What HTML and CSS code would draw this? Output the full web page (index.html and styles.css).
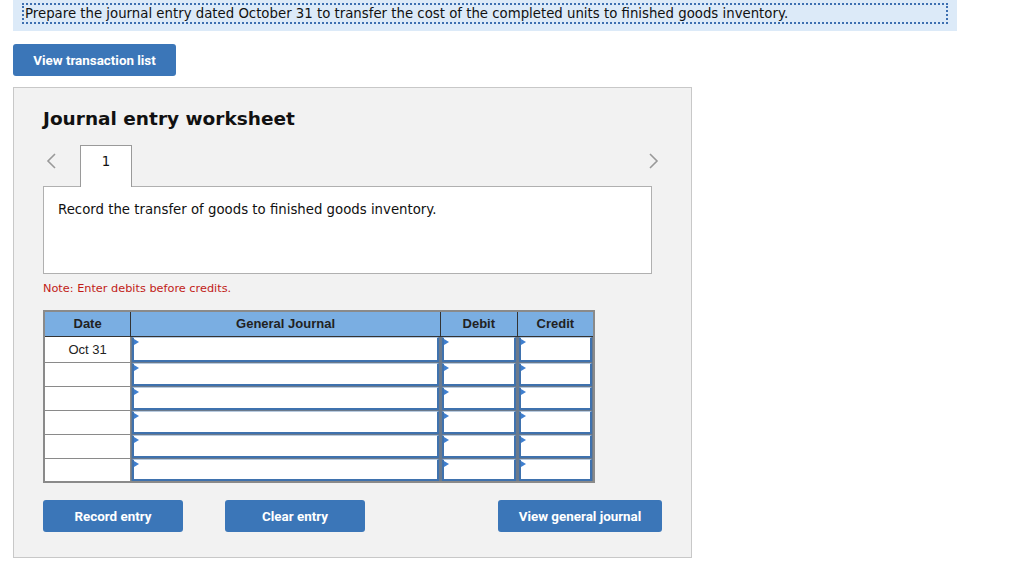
FILE: index.html
```html
<!DOCTYPE html>
<html>
<head>
<meta charset="utf-8">
<link rel="stylesheet" href="styles.css">
</head>
<body>
<div class="prompt"><span class="prompt-text">Prepare the journal entry dated October 31 to transfer the cost of the completed units to finished goods inventory.</span></div>
<div class="top-btn-row"><button class="btn btn-wide">View transaction list</button></div>
<div class="panel">
  <h2 class="title">Journal entry worksheet</h2>
  <div class="tabs">
    <span class="arrow arrow-left"><svg width="12" height="18" viewBox="0 0 12 18"><path d="M10 2 L3 9 L10 16" fill="none" stroke="#999" stroke-width="1.6"/></svg></span>
    <div class="tab">1</div>
    <span class="arrow arrow-right"><svg width="12" height="18" viewBox="0 0 12 18"><path d="M2 2 L9 9 L2 16" fill="none" stroke="#999" stroke-width="1.6"/></svg></span>
  </div>
  <div class="desc">Record the transfer of goods to finished goods inventory.</div>
  <div class="note">Note: Enter debits before credits.</div>
  <table class="journal">
    <thead>
      <tr><th class="c-date">Date</th><th class="c-acct">General Journal</th><th class="c-num">Debit</th><th class="c-num">Credit</th></tr>
    </thead>
    <tbody>
      <tr><td class="d">Oct 31</td><td class="in"><div class="box"></div></td><td class="in"><div class="box"></div></td><td class="in"><div class="box"></div></td></tr>
      <tr><td class="d"></td><td class="in"><div class="box"></div></td><td class="in"><div class="box"></div></td><td class="in"><div class="box"></div></td></tr>
      <tr><td class="d"></td><td class="in"><div class="box"></div></td><td class="in"><div class="box"></div></td><td class="in"><div class="box"></div></td></tr>
      <tr><td class="d"></td><td class="in"><div class="box"></div></td><td class="in"><div class="box"></div></td><td class="in"><div class="box"></div></td></tr>
      <tr><td class="d"></td><td class="in"><div class="box"></div></td><td class="in"><div class="box"></div></td><td class="in"><div class="box"></div></td></tr>
      <tr><td class="d"></td><td class="in"><div class="box"></div></td><td class="in"><div class="box"></div></td><td class="in"><div class="box"></div></td></tr>
    </tbody>
  </table>
  <div class="actions">
    <button class="btn btn-act">Record entry</button>
    <button class="btn btn-act btn-clear">Clear entry</button>
    <button class="btn btn-act btn-view">View general journal</button>
  </div>
</div>
</body>
</html>
```
FILE: styles.css
```css
* { box-sizing: border-box; }
body {
  margin: 0;
  background: #fff;
  font-family: "DejaVu Sans", Verdana, sans-serif;
  color: #111;
}
.prompt {
  margin-left: 13px;
  width: 944px;
  height: 31px;
  background: #dceaf8;
  padding: 3px 9px 0 9px;
}
.prompt-text {
  display: block;
  border: 2px dotted #3d6fb0;
  padding: 1px 0 0 1px;
  font-size: 13.3px;
  line-height: 16px;
  height: 21px;
  color: #111;
}
.top-btn-row {
  padding: 13px 0 0 13px;
  height: 56px;
}
.btn {
  border: none;
  background: #3b76b8;
  color: #fff;
  font-family: Roboto, "Liberation Sans", sans-serif;
  font-weight: bold;
  font-size: 13.4px;
  border-radius: 3px;
  cursor: pointer;
}
.btn-wide { width: 163px; height: 32px; }
.panel {
  margin-left: 13px;
  width: 679px;
  height: 471px;
  background: #f2f2f2;
  border: 1px solid #c8c8c8;
  padding: 0 0 0 29px;
}
.title {
  margin: 19px 0 0 0;
  font-size: 18.5px;
  font-weight: bold;
  line-height: 24px;
  color: #111;
}
.tabs {
  display: flex;
  align-items: flex-start;
  margin-top: 14px;
  height: 41px;
  width: 620px;
  position: relative;
}
.arrow { display: block; height: 18px; margin-top: 7px; }
.arrow-left { margin-left: 2px; margin-right: 23px; }
.arrow-right { margin-left: auto; margin-right: 3px; }
.tab {
  width: 52px;
  height: 42px;
  background: #fff;
  border: 1px solid #9a9a9a;
  border-bottom: none;
  text-align: center;
  font-size: 13.3px;
  padding-top: 8px;
  position: relative;
  z-index: 1;
}
.desc {
  width: 609px;
  height: 88px;
  background: #fff;
  border: 1px solid #b0b0b0;
  margin-top: 0;
  padding: 14px 0 0 14px;
  font-size: 13.3px;
  line-height: 17px;
}
.note {
  color: #c11b17;
  font-size: 11.3px;
  margin-top: 8px;
  line-height: 14px;
}
.journal {
  margin-top: 14px;
  border-collapse: collapse;
  width: 552px;
  font-family: "Liberation Sans", Arial, sans-serif;
  font-size: 13px;
  border: 2px solid #8a8a8a;
}
.journal th {
  background: #7aaee2;
  height: 25px;
  font-weight: bold;
  color: #222;
  border: 1px solid #333;
  border-top: none;
  padding: 0;
}
.c-date { width: 87px; }
.c-acct { width: 311px; }
.c-num { width: 77px; }
.journal td { padding: 0; height: 24px; }
.journal td.d {
  background: #fff;
  border: 1px solid #8a8a8a;
  border-top: 1px solid #c8c8c8;
  text-align: center;
  color: #222;
}
.journal tbody tr:first-child td { height: 26px; }
.journal td.in {
  border: 1px solid #6b7a8c;
  background: #6b7a8c;
  padding: 0 1px 0 1px;
  vertical-align: top;
}
.box {
  height: 100%;
  min-height: 22px;
  background: #fff;
  border: 2px solid #3f72ae;
  border-top: 1px solid #b8cbe0;
  position: relative;
}
.journal tbody tr:first-child .box { min-height: 24px; }
.box::before {
  content: "";
  position: absolute;
  left: 0;
  top: 1px;
  border-left: 5px solid #3f7fcf;
  border-top: 3px solid transparent;
  border-bottom: 3px solid transparent;
}
.actions {
  display: flex;
  margin-top: 17px;
  width: 619px;
}
.btn-act { width: 140px; height: 32px; }
.btn-clear { margin-left: 42px; }
.btn-view { margin-left: auto; width: 164px; }
```
